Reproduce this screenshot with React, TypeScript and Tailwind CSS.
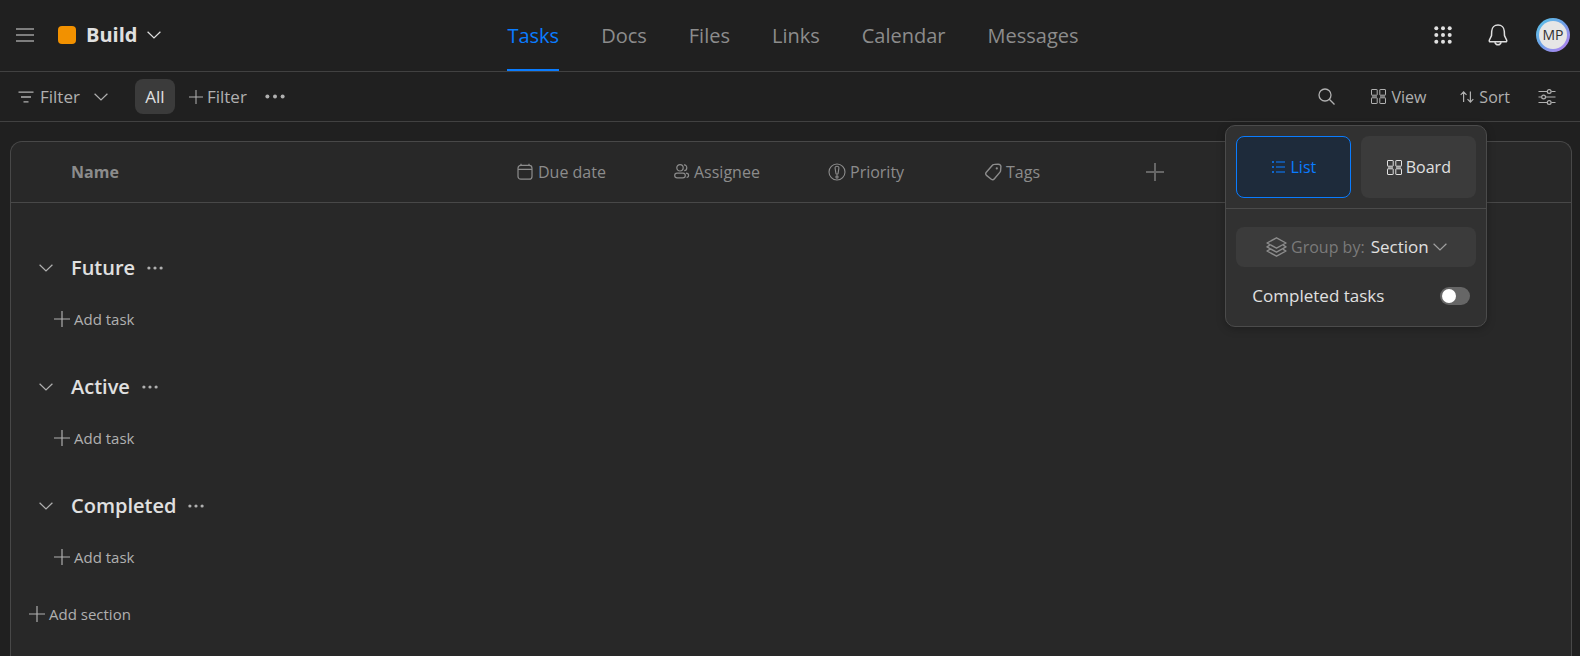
import React from "react";

type IconProps = { className?: string };

const ChevronDown = ({ className = "" }: IconProps) => (
  <svg viewBox="0 0 14 8" className={`h-2 w-3.5 ${className}`} fill="none" stroke="currentColor" strokeWidth="1.2" aria-hidden="true">
    <path d="M0.6 0.7 7 7 13.4 0.7" />
  </svg>
);

const Plus = ({ className = "h-4 w-4" }: IconProps) => (
  <svg viewBox="0 0 15 15" className={className} fill="none" stroke="currentColor" strokeWidth="1.1" aria-hidden="true">
    <path d="M7.5 0V15M0 7.5H15" />
  </svg>
);

const Dots = ({ className = "h-1 w-4" }: IconProps) => (
  <svg viewBox="0 0 16 4" className={className} fill="currentColor" aria-hidden="true">
    <circle cx="1.9" cy="2" r="1.6" />
    <circle cx="8" cy="2" r="1.6" />
    <circle cx="14.1" cy="2" r="1.6" />
  </svg>
);

const BoardIcon = ({ className = "" }: IconProps) => (
  <svg viewBox="0 0 15 15" className={`h-[15px] w-[15px] ${className}`} fill="none" stroke="currentColor" aria-hidden="true">
    <rect x="0.5" y="0.5" width="5.7" height="5.7" rx="0.4" />
    <rect x="8.8" y="0.5" width="5.7" height="5.7" rx="0.4" />
    <rect x="0.5" y="8.8" width="5.7" height="5.7" rx="0.4" />
    <rect x="8.8" y="8.8" width="5.7" height="5.7" rx="0.4" />
    <path d="M1 7.5H6M9 7.5H14" strokeWidth="1.6" strokeOpacity="0.6" />
  </svg>
);

const CalendarIcon = () => (
  <svg viewBox="0 0 18 18" className="h-[18px] w-[18px]" fill="none" stroke="currentColor" strokeWidth="1.2" aria-hidden="true">
    <rect x="2" y="2.4" width="14" height="13.8" rx="2.8" />
    <path d="M2 6.3H16M5 0.8V2.4M13 0.8V2.4" />
  </svg>
);

const PeopleIcon = () => (
  <svg viewBox="0 0 18 18" className="h-[18px] w-[18px]" fill="none" stroke="currentColor" strokeWidth="1.2" aria-hidden="true">
    <circle cx="8" cy="4.8" r="3.2" />
    <path d="M5 10.2H11C12.5 10.2 13.3 11.2 13.3 12.5S12.4 14.8 10.9 14.8H5.1C3.6 14.8 2.7 13.8 2.7 12.5S3.5 10.2 5 10.2Z" />
    <path d="M12 1.9C13.6 1.7 14.8 3 14.8 4.8S13.7 7.7 12.2 7.7M14 10.2C15.7 10.2 16.6 11.1 16.6 12.3S15.8 14.4 14.6 14.4" />
  </svg>
);

const PriorityIcon = () => (
  <svg viewBox="0 0 18 18" className="h-[18px] w-[18px]" fill="none" stroke="currentColor" strokeWidth="1.1" aria-hidden="true">
    <circle cx="9" cy="9" r="8" />
    <path d="M9 3.2C10.4 3.2 11 4 10.9 5.2L10.1 10.3C9.9 11.5 8.1 11.5 7.9 10.3L7.1 5.2C7 4 7.6 3.2 9 3.2Z" />
    <circle cx="9" cy="14" r="1.1" />
  </svg>
);

const TagIcon = () => (
  <svg viewBox="0 0 18 18" className="h-[18px] w-[18px]" fill="none" stroke="currentColor" strokeWidth="1.4" strokeLinejoin="round" aria-hidden="true">
    <path d="M10.4 1.4 14.2 1.2C16 1.2 17 2.2 16.9 3.8L16.6 7.4C16.6 8.2 16.3 8.8 15.8 9.4L10.4 15.8C9.5 16.9 8.3 17 7.3 16.2L2.5 12.4C1.5 11.5 1.5 10.3 2.3 9.3L8.2 2.5C8.8 1.8 9.5 1.4 10.4 1.4Z" />
    <circle cx="12.8" cy="5.4" r="1.1" fill="currentColor" stroke="none" />
  </svg>
);

const tabs = ["Tasks", "Docs", "Files", "Links", "Calendar", "Messages"];

const columns = [
  { label: "Due date", icon: <CalendarIcon /> },
  { label: "Assignee", icon: <PeopleIcon /> },
  { label: "Priority", icon: <PriorityIcon /> },
  { label: "Tags", icon: <TagIcon /> },
];

const sections = ["Future", "Active", "Completed"];

function Header() {
  return (
    <header className="grid h-[72px] grid-cols-[1fr_auto_1fr] items-stretch border-b border-[#414141] pr-2.5 pl-4">
      <div className="flex items-center pb-0.5">
        <button aria-label="Menu" className="text-[#dcdcdc]">
          <svg viewBox="0 0 18 14" className="h-3.5 w-[18px]" stroke="currentColor" strokeWidth="1.2" aria-hidden="true">
            <path d="M0 1H18M0 7H18M0 13H18" />
          </svg>
        </button>
        <button className="ml-6 flex items-center text-[#e0e0e0]">
          <span className="h-[18px] w-[18px] rounded bg-[#f29100]" />
          <span className="ml-2.5 text-xl font-bold">Build</span>
          <ChevronDown className="ml-2.5" />
        </button>
      </div>
      <nav className="flex gap-[42px] text-xl text-[#8c8c8c]">
        {tabs.map((tab, i) => (
          <a
            key={tab}
            href={`#${tab.toLowerCase()}`}
            aria-current={i === 0 ? "page" : undefined}
            className={`flex items-center border-y-2 border-t-transparent ${i === 0 ? "border-b-[#0a7cff] text-[#0a7cff]" : "border-b-transparent"}`}
          >
            {tab}
          </a>
        ))}
      </nav>
      <div className="flex items-center justify-end pb-0.5">
        <button aria-label="Apps" className="text-[#e0e0e0]">
          <svg viewBox="0 0 18 18" className="h-[18px] w-[18px]" fill="currentColor" aria-hidden="true">
            {[2.3, 9, 15.7].map((y) => [2.3, 9, 15.7].map((x) => <circle key={`${x}-${y}`} cx={x} cy={y} r="2" />))}
          </svg>
        </button>
        <button aria-label="Notifications" className="ml-9 text-[#e0e0e0]">
          <svg viewBox="0 0 20 22" className="h-[22px] w-5" fill="none" stroke="currentColor" strokeWidth="1.5" strokeLinejoin="round" aria-hidden="true">
            <path d="M10 1C6.4 1 3.9 3.6 3.7 7.2L3.5 11.6L1.4 16C1 17.1 1.4 17.8 2.4 17.8H17.6C18.6 17.8 19 17.1 18.6 16L16.5 11.6L16.3 7.2C16.1 3.6 13.6 1 10 1Z" />
            <path d="M6.8 18.2C7.4 20 8.4 20.8 10 20.8S12.6 20 13.2 18.2" />
          </svg>
        </button>
        <button aria-label="Account" className="ml-7 rounded-full bg-linear-to-br from-[#55c4e6] via-[#6fa0e8] to-[#b877f0] p-[3px]">
          <span className="flex h-7 w-7 items-center justify-center rounded-full bg-[#e6e6e6] text-sm text-[#303030]">MP</span>
        </button>
      </div>
    </header>
  );
}

function ViewPanel() {
  return (
    <div className="absolute top-[4px] right-[-61px] z-10 w-[262px] rounded-[10px] border border-[#4b4b4b] bg-[#313131] text-[#e0e0e0] shadow-[0_2px_8px_rgba(0,0,0,0.25)]">
      <div className="grid grid-cols-2 gap-2.5 border-b border-[#4b4b4b] p-2.5">
        <button aria-pressed="true" className="flex h-[62px] items-center justify-center gap-1.5 rounded-lg border border-[#0a7cff] bg-[#1e2b3b] text-base text-[#0a7cff]">
          <svg viewBox="0 0 13 12" className="h-3 w-[13px]" stroke="currentColor" strokeWidth="1.6" aria-hidden="true">
            <path d="M0 1H2M0 6H2M0 11H2" />
            <path d="M4 1H13M4 6H13M4 11H13" strokeOpacity="0.7" />
          </svg>
          List
        </button>
        <button aria-pressed="false" className="flex h-[62px] items-center justify-center gap-1 rounded-lg bg-[#3b3b3b] text-base">
          <BoardIcon />
          Board
        </button>
      </div>
      <div className="px-2.5 pt-[18px] pb-3">
        <button className="flex h-10 w-full items-center justify-center rounded-lg bg-[#3b3b3b]">
          <svg viewBox="0 0 21 20" className="h-5 w-[21px] text-[#8c8c8c]" fill="none" stroke="currentColor" strokeWidth="1.4" strokeLinejoin="round" aria-hidden="true">
            <path d="M10.5 0.8 20 6 10.5 11.2 1 6Z" />
            <path d="M3.8 8.2 1 9.9 10.5 15.2 20 9.9 17.2 8.2M3.8 12.3 1 14 10.5 19.2 20 14 17.2 12.3" />
          </svg>
          <span className="ml-1 text-base text-[#7a7a7a]">Group by:</span>
          <span className="ml-1.5 text-[17px]">Section</span>
          <ChevronDown className="ml-1 text-[#a0a0a0]" />
        </button>
        <label className="mt-[11px] flex h-9 items-center justify-between pr-1.5 pl-4 text-[17px]">
          Completed tasks
          <input
            type="checkbox"
            role="switch"
            className="h-[18px] w-[30px] appearance-none rounded-full bg-[#666] p-0.5 before:block before:h-3.5 before:w-3.5 before:rounded-full before:bg-white checked:bg-[#0a7cff] checked:before:ml-3"
          />
        </label>
      </div>
    </div>
  );
}

function Toolbar() {
  return (
    <div className="flex h-[50px] items-center justify-between border-b border-[#414141] pr-6 pl-[18px] text-[#b0b0b0]">
      <div className="flex items-center text-[17px]">
        <button className="flex items-center">
          <svg viewBox="0 0 16 12" className="h-3 w-4" stroke="currentColor" strokeWidth="1.3" aria-hidden="true">
            <path d="M0.5 1.2H15.5M3 6H13M5.5 10.8H10.5" />
          </svg>
          <span className="ml-1.5">Filter</span>
          <ChevronDown className="ml-3.5" />
        </button>
        <button className="ml-[27px] h-[35px] w-10 rounded-lg bg-[#3b3b3b] text-[#e0e0e0]">All</button>
        <button className="ml-3.5 flex items-center gap-1">
          <Plus className="h-3.5 w-3.5" />
          Filter
        </button>
        <button aria-label="More filters" className="ml-[18px]">
          <Dots className="h-[5px] w-5" />
        </button>
      </div>
      <div className="flex items-center text-base">
        <button aria-label="Search">
          <svg viewBox="0 0 17 17" className="h-[17px] w-[17px]" fill="none" stroke="currentColor" strokeWidth="1.3" aria-hidden="true">
            <circle cx="7" cy="7" r="6" />
            <path d="M11.3 11.3 16.5 16.5" />
          </svg>
        </button>
        <div className="relative ml-9 flex h-[49px] items-center">
          <button aria-expanded="true" className="flex items-center gap-[5px]">
            <BoardIcon />
            View
          </button>
          <div className="absolute top-full right-0 h-0 w-0">
            <ViewPanel />
          </div>
        </div>
        <button className="ml-[34px] flex items-center gap-[5px]">
          <svg viewBox="0 0 14 12" className="h-3 w-3.5" fill="none" stroke="currentColor" strokeWidth="1.2" aria-hidden="true">
            <path d="M3.6 11V1M0.7 3.8 3.6 0.9 6.5 3.8M10.4 0.5V11M7.5 8.2 10.4 11.1 13.3 8.2" />
          </svg>
          Sort
        </button>
        <button aria-label="Settings" className="ml-7">
          <svg viewBox="0 0 18 16" className="h-4 w-[18px]" fill="none" stroke="currentColor" strokeWidth="1.2" aria-hidden="true">
            <path d="M0.5 2.5H9M13.4 2.5H17.5M0.5 8H3.4M7.8 8H17.5M0.5 13.5H9M13.4 13.5H17.5" />
            <circle cx="11.2" cy="2.5" r="1.9" />
            <circle cx="5.6" cy="8" r="1.9" />
            <circle cx="11.2" cy="13.5" r="1.9" />
          </svg>
        </button>
      </div>
    </div>
  );
}

function TaskTable() {
  return (
    <main className="mt-[19px] mr-2 ml-2.5 flex grow flex-col rounded-t-xl border border-b-0 border-[#484848] bg-[#282828]">
      <table className="w-full table-fixed border-separate border-spacing-0 text-left">
        <colgroup>
          <col className="w-[505px]" />
          <col className="w-[156px]" />
          <col className="w-[156px]" />
          <col className="w-[156px]" />
          <col className="w-[156px]" />
          <col />
        </colgroup>
        <thead>
          <tr className="h-[61px] text-base text-[#8c8c8c]">
            <th className="border-b border-[#484848] pl-[60px] font-bold">Name</th>
            {columns.map((column) => (
              <th key={column.label} className="border-b border-[#484848] font-normal">
                <span className="flex items-center gap-1">
                  {column.icon}
                  {column.label}
                </span>
              </th>
            ))}
            <th className="border-b border-[#484848] pl-1.5">
              <button aria-label="Add column" className="flex items-center text-[#666]">
                <svg viewBox="0 0 18 18" className="h-[18px] w-[18px]" stroke="currentColor" strokeWidth="2" aria-hidden="true">
                  <path d="M9 0V18M0 9H18" />
                </svg>
              </button>
            </th>
          </tr>
          <tr className="h-[23px]" />
        </thead>
        {sections.map((section) => (
          <tbody key={section}>
            <tr>
              <th colSpan={6} className="pt-[17px] font-normal">
                <div className="flex h-[50px] items-center pl-7">
                  <button aria-label={`Collapse ${section}`} className="text-[#b0b0b0]">
                    <ChevronDown />
                  </button>
                  <h2 className="ml-[18px] text-xl font-semibold text-[#e0e0e0]">{section}</h2>
                  <button aria-label={`${section} options`} className="ml-3 text-[#b0b0b0]">
                    <Dots />
                  </button>
                </div>
              </th>
            </tr>
            <tr>
              <td colSpan={6} className="p-0">
                <div className="flex h-[52px] items-center pl-[43px]">
                  <button className="flex items-center gap-1 text-[15px] text-[#b0b0b0]">
                    <Plus />
                    Add task
                  </button>
                </div>
              </td>
            </tr>
          </tbody>
        ))}
      </table>
      <div className="flex h-[62px] items-center pl-[18px]">
        <button className="flex items-center gap-1 text-[15px] text-[#b0b0b0]">
          <Plus />
          Add section
        </button>
      </div>
    </main>
  );
}

export default function App() {
  return (
    <div className="flex min-h-screen flex-col bg-[#202020] font-['Open_Sans','Noto_Sans',sans-serif]">
      <Header />
      <Toolbar />
      <TaskTable />
    </div>
  );
}
